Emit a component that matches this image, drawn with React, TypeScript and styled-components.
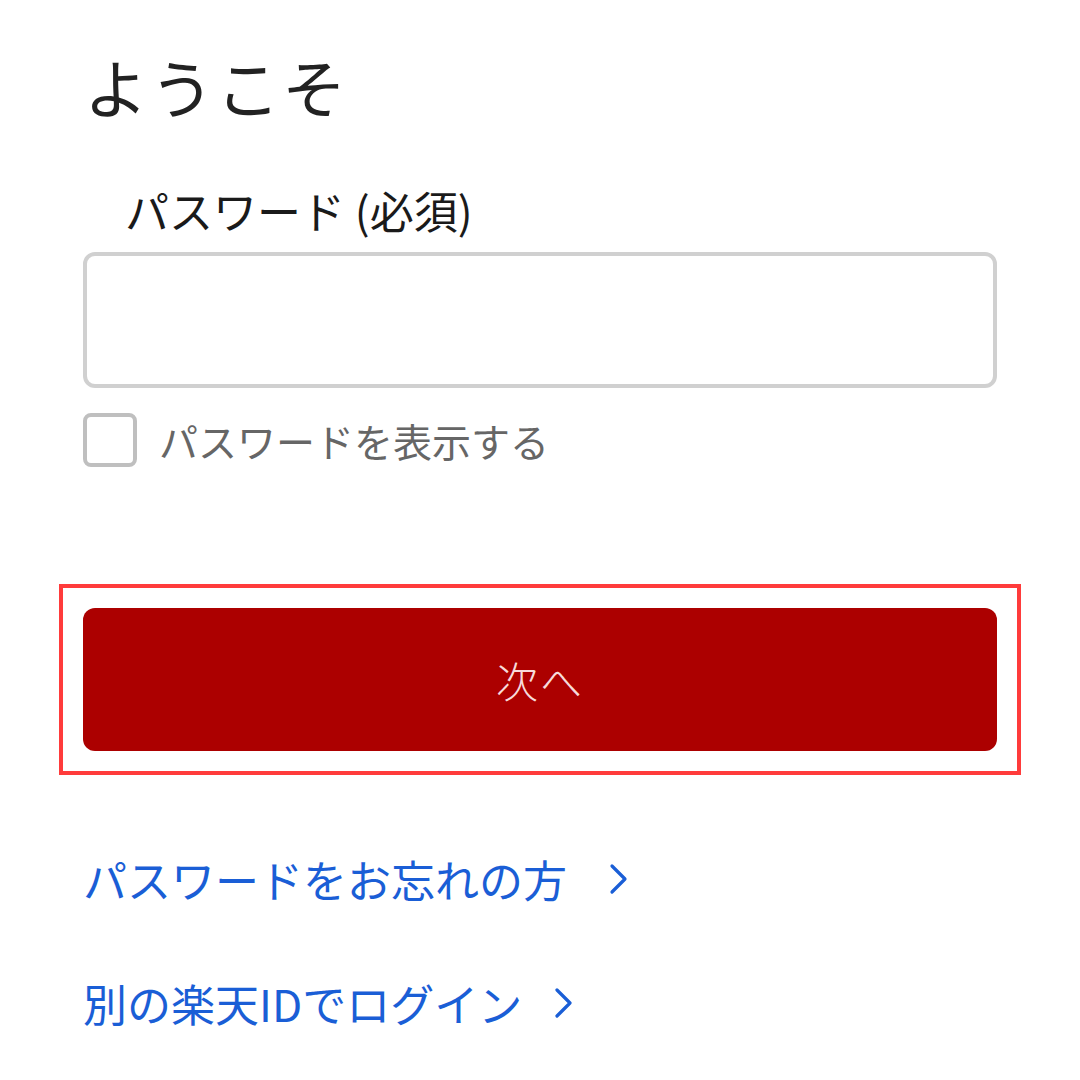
import React from "react";
import styled, { createGlobalStyle } from "styled-components";

const Global = createGlobalStyle`
  html, body { margin: 0; padding: 0; background: #fff; }
  body { font-family: "Noto Sans CJK JP", "Noto Sans", sans-serif; }
`;

const Page = styled.main`
  width: 914px;
  padding: 0 0 0 83px;
  display: flex;
  flex-direction: column;
`;

const Title = styled.h1`
  margin: 45px 0 0 1px;
  font-size: 64px;
  line-height: 80px;
  font-weight: 400;
  color: #222;
  letter-spacing: 2px;
`;

const Label = styled.label`
  margin: 60px 0 0 42px;
  font-size: 44px;
  line-height: 50px;
  color: #1a1a1a;
`;

const Input = styled.input`
  box-sizing: border-box;
  margin-top: 17px;
  width: 914px;
  height: 136px;
  border: 4px solid #d0d0d0;
  border-radius: 12px;
  outline: none;
  font-size: 40px;
  padding: 0 24px;
  background: #fff;
`;

const CheckRow = styled.label`
  margin-top: 25px;
  display: flex;
  align-items: center;
  gap: 22px;
  cursor: pointer;
`;

const Box = styled.span`
  box-sizing: border-box;
  width: 54px;
  height: 54px;
  border: 4px solid #bfbfbf;
  border-radius: 8px;
  background: #fff;
  flex: none;
`;

const CheckText = styled.span`
  font-size: 39px;
  line-height: 54px;
  color: #666;
`;

const Highlight = styled.div`
  margin: 117px -24px 0;
  padding: 20px;
  border: 4px solid #ff3b3b;
`;

const Button = styled.button`
  width: 100%;
  height: 143px;
  border: none;
  border-radius: 12px;
  background: #ac0000;
  color: #f7dada;
  font-family: "Noto Sans CJK JP", sans-serif;
  font-size: 42px;
  font-weight: 300;
  letter-spacing: 2px;
  cursor: pointer;
`;

const LinkRow = styled.a<{ $gap: number; $top: number }>`
  display: flex;
  align-items: center;
  margin-top: ${(p) => p.$top}px;
  font-size: 44px;
  line-height: 60px;
  color: #1a5ed6;
  text-decoration: none;
  svg { margin-left: ${(p) => p.$gap}px; }
`;

const Chevron = () => (
  <svg width="20" height="32" viewBox="0 0 20 32" fill="none">
    <path d="M3 3 L16 16 L3 29" stroke="#1a5ed6" strokeWidth="3.2" strokeLinecap="round" strokeLinejoin="round" />
  </svg>
);

export default function App() {
  return (
    <>
      <Global />
      <Page>
        <Title>ようこそ</Title>
        <Label htmlFor="pw">パスワード (必須)</Label>
        <Input id="pw" type="password" />
        <CheckRow>
          <Box />
          <CheckText>パスワードを表示する</CheckText>
        </CheckRow>
        <Highlight>
          <Button>次へ</Button>
        </Highlight>
        <LinkRow href="#" $gap={42} $top={74}>
          パスワードをお忘れの方
          <Chevron />
        </LinkRow>
        <LinkRow href="#" $gap={32} $top={64}>
          別の楽天IDでログイン
          <Chevron />
        </LinkRow>
      </Page>
    </>
  );
}
